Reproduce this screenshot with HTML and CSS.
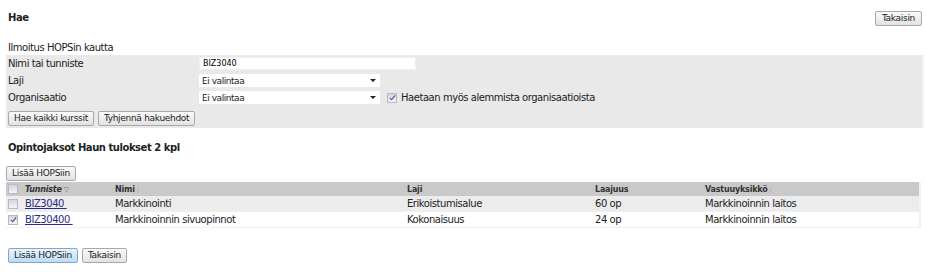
FILE: index.html
```html
<!DOCTYPE html>
<html lang="fi">
<head>
    <meta charset="UTF-8">
    <title>Hae opintojaksoja</title>
    <link rel="stylesheet" href="styles.css">
</head>
<body>
    <div class="page">
        <!-- Otsikko ja paluu -->
        <div class="top-bar">
            <h1>Hae</h1>
            <button type="button" class="btn">Takaisin</button>
        </div>

        <div class="form-title">Ilmoitus HOPSin kautta</div>
        <form class="search-panel">
            <div class="form-row">
                <label for="nimi">Nimi tai tunniste</label>
                <input type="text" id="nimi" class="text-input" value="BIZ3040">
            </div>
            <div class="form-row">
                <label for="laji">Laji</label>
                <div class="select-box" id="laji"><span>Ei valintaa</span><span class="arrow"></span></div>
            </div>
            <div class="form-row">
                <label for="org">Organisaatio</label>
                <div class="select-box" id="org"><span>Ei valintaa</span><span class="arrow"></span></div>
                <span class="check checked"></span>
                <span class="check-label">Haetaan myös alemmista organisaatioista</span>
            </div>
            <div class="form-buttons">
                <button type="button" class="btn">Hae kaikki kurssit</button>
                <button type="button" class="btn">Tyhjennä hakuehdot</button>
            </div>
        </form>

        <h2>Opintojaksot Haun tulokset 2 kpl</h2>
        <button type="button" class="btn add-top">Lisää HOPSiin</button>

        <table class="results">
            <thead>
                <tr>
                    <th class="col-check"><span class="check"></span></th>
                    <th class="col-id"><em>Tunniste</em><span class="sort active">▽</span></th>
                    <th class="col-name">Nimi<span class="sort">/</span></th>
                    <th class="col-type">Laji</th>
                    <th class="col-size">Laajuus</th>
                    <th class="col-unit">Vastuuyksikkö<span class="sort">/</span></th>
                </tr>
            </thead>
            <tbody>
                <tr class="odd">
                    <td><span class="check"></span></td>
                    <td><a href="#">BIZ3040&nbsp;</a></td>
                    <td>Markkinointi</td>
                    <td>Erikoistumisalue</td>
                    <td>60 op</td>
                    <td>Markkinoinnin laitos</td>
                </tr>
                <tr>
                    <td><span class="check checked"></span></td>
                    <td><a href="#">BIZ30400&nbsp;</a></td>
                    <td>Markkinoinnin sivuopinnot</td>
                    <td>Kokonaisuus</td>
                    <td>24 op</td>
                    <td>Markkinoinnin laitos</td>
                </tr>
            </tbody>
        </table>

        <div class="bottom-buttons">
            <button type="button" class="btn btn-primary">Lisää HOPSiin</button>
            <button type="button" class="btn">Takaisin</button>
        </div>
    </div>
</body>
</html>
```

FILE: styles.css
```css
body {
    margin: 0;
    font-family: 'DejaVu Sans', Verdana, sans-serif;
    font-size: 10px;
    letter-spacing: -0.45px;
    color: #222;
    background: #fff;
}

.page {
    width: 918px;
    padding: 11px 0 0 6px;
}

.top-bar {
    display: flex;
    justify-content: space-between;
    align-items: flex-start;
    height: 30px;
}

h1 {
    margin: 1px 0 0 2px;
    font-size: 10px;
    font-weight: bold;
}

.btn {
    font-family: 'DejaVu Sans', Verdana, sans-serif;
    font-size: 9px;
    letter-spacing: -0.3px;
    color: #222;
    height: 15px;
    padding: 0 5px;
    border: 1px solid #a8a8a8;
    border-radius: 2px;
    background: linear-gradient(#fafafa, #e2e2e2);
    cursor: pointer;
    line-height: 13px;
}

.top-bar .btn {
    margin-right: 2px;
    padding: 0 6px;
}

.form-title {
    margin: 0 0 1px 2px;
    height: 13px;
    line-height: 13px;
}

.search-panel {
    background: #e9e9e9;
    border-right: 2px solid #f4f4f4;
    padding: 0 0 0 2px;
    height: 73px;
    margin: 0;
}

.form-row {
    display: flex;
    align-items: center;
    height: 17px;
}

.form-row label {
    width: 191px;
    font-size: 10px;
}

.text-input {
    width: 217px;
    height: 13px;
    box-sizing: border-box;
    border: 1px solid #f0f0f0;
    background: #fff;
    font-family: 'DejaVu Sans', Verdana, sans-serif;
    font-size: 8px;
    padding: 0 3px;
    outline: none;
}

.select-box {
    display: flex;
    justify-content: space-between;
    align-items: center;
    width: 181px;
    height: 13px;
    box-sizing: border-box;
    background: #fff;
    padding: 0 4px 0 3px;
    font-size: 9px;
}

.arrow {
    width: 0;
    height: 0;
    border-left: 3px solid transparent;
    border-right: 3px solid transparent;
    border-top: 3px solid #222;
}

.check {
    display: inline-block;
    width: 10px;
    height: 10px;
    box-sizing: border-box;
    border: 1px solid #b8b8c8;
    background: linear-gradient(#d4d4dc, #f4f4f8);
    position: relative;
    vertical-align: middle;
}

.check.checked::after {
    content: "";
    position: absolute;
    left: 3px;
    top: 0;
    width: 2px;
    height: 5px;
    border: solid #3b4fa0;
    border-width: 0 1px 1px 0;
    transform: rotate(40deg);
}

.form-row .check {
    margin: 0 4px 0 7px;
}

.check-label {
    font-size: 10px;
}

.form-buttons {
    display: flex;
    gap: 4px;
    margin-top: 5px;
}

h2 {
    margin: 14px 0 0 2px;
    font-size: 10px;
    font-weight: bold;
    height: 13px;
}

.add-top {
    margin-top: 11px;
    display: block;
}

.results {
    width: 915px;
    border-collapse: collapse;
    margin-top: 1px;
    border-right: 2px solid #f2f2f2;
}

.results th {
    background: #c9c9c9;
    height: 14px;
    padding: 0;
    text-align: left;
    font-size: 8px;
    font-weight: bold;
    color: #333;
    letter-spacing: -0.2px;
}

.results td {
    height: 15px;
    padding: 0;
    font-size: 10px;
    border-bottom: 1px solid #f0f0f0;
}

.results tr.odd td {
    background: #ececec;
}

.results th.col-check, .results td:first-child {
    width: 17px;
    padding-left: 2px;
}

.col-id {
    width: 90px;
}

.col-name {
    width: 292px;
}

.col-type {
    width: 188px;
}

.col-size {
    width: 110px;
}

.sort {
    color: #aaa;
    font-weight: normal;
    margin-left: 2px;
    font-size: 7px;
}

.sort.active {
    color: #777;
}

.results a {
    color: #2a2a8a;
    text-decoration: underline;
}

.bottom-buttons {
    display: flex;
    gap: 4px;
    margin: 20px 0 0 2px;
}

.btn-primary {
    background: linear-gradient(#eaf4fc, #bcdcf4);
    border-color: #7fa7c9;
}
```
